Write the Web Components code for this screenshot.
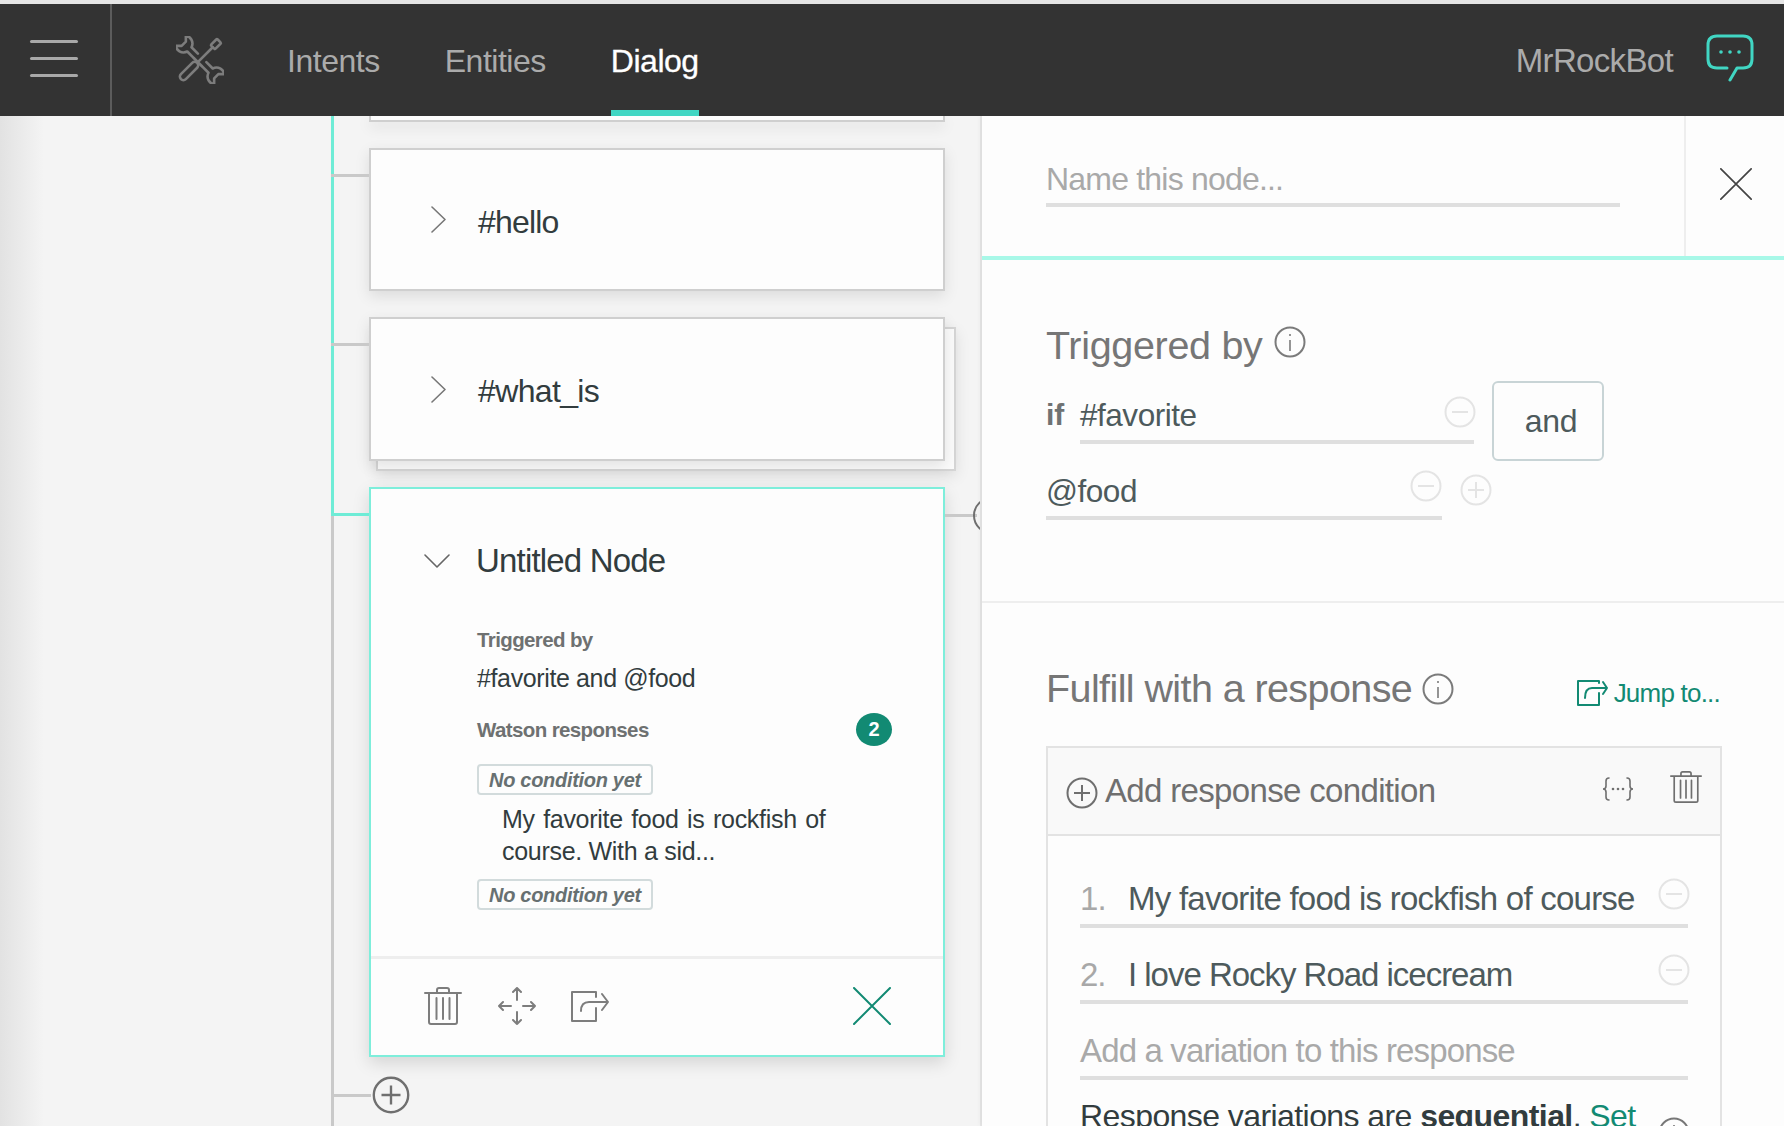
<!DOCTYPE html>
<html lang="en">
<head>
<meta charset="utf-8">
<title>Dialog</title>
<style>
  html, body { margin: 0; height: 1126px; overflow: hidden; background: #e6e6e6; }
  body { padding-top: 4px; box-sizing: border-box; font-family: "Liberation Sans", Arial, sans-serif; }
  .workspace { display: flex; height: 1010px; overflow: hidden; }
</style>
</head>
<body>
<app-bar></app-bar>
<div class="workspace">
  <tree-canvas>
    <node-card class="cut"></node-card>
    <node-card style="height:143px">#hello</node-card>
    <node-card stacked>#what_is</node-card>
    <active-node title="Untitled Node" trigger="#favorite and @food">
      <span slot="response">My favorite food is rockfish of course. With a sid...</span>
    </active-node>
    <add-node></add-node>
  </tree-canvas>
  <editor-panel></editor-panel>
</div>

<script>
  // icons are kept here so every shadow root can pull the one it needs
  const ICONS = {
    tools: `<svg width="48" height="48" viewBox="0 0 48 48" fill="none" stroke="currentColor" stroke-width="2.6" stroke-linecap="round" stroke-linejoin="round">
      <g transform="rotate(45 24 24)"><rect x="21" y="-3" width="6" height="9" rx="1"/><path d="M24 6V26M18.5 27H29.5"/><rect x="20.5" y="28" width="7" height="23" rx="3.5"/></g>
      <g transform="rotate(-45 24 24)"><path d="M21 18V9C15 7 14 0 17-3L21 1H27L31-3C34 0 33 7 27 9V18M21 30V39C15 41 14 48 17 51L21 47H27L31 51C34 48 33 41 27 39V30"/></g></svg>`,
    chat: `<svg width="48" height="48" viewBox="0 0 48 48" fill="none" stroke="currentColor" stroke-width="3" stroke-linecap="round" stroke-linejoin="round">
      <path d="M21 34H11Q2 34 2 25V11Q2 2 11 2H37Q46 2 46 11V25Q46 34 37 34H31L24 46"/><g fill="currentColor" stroke="none"><circle cx="15" cy="18" r="1.8"/><circle cx="24" cy="18" r="1.8"/><circle cx="33" cy="18" r="1.8"/></g></svg>`,
    trash: `<svg width="38" height="38" viewBox="0 0 38 38" fill="none" stroke="currentColor" stroke-width="2" stroke-linecap="round" stroke-linejoin="round">
      <path d="M1 6H37M13 6V3Q13 1 15 1H23Q25 1 25 3V6M5 6V35Q5 37 7 37H31Q33 37 33 35V6M12.5 11V32M19 11V32M25.5 11V32"/></svg>`,
    move: `<svg width="38" height="38" viewBox="0 0 38 38" fill="none" stroke="currentColor" stroke-width="2" stroke-linecap="round" stroke-linejoin="round">
      <path d="M19 1V13M15 5L19 1L23 5M19 25V37M15 33L19 37L23 33M1 19H13M5 15L1 19L5 23M25 19H37M33 15L37 19L33 23"/></svg>`,
    share: `<svg width="39" height="31" viewBox="0 0 39 31" fill="none" stroke="currentColor" stroke-width="2" stroke-linecap="round" stroke-linejoin="round">
      <path d="M25 6V1H1V30H25V17M10 20Q10 11 18 11H37M31 3L37 11L31 19"/></svg>`,
    jump: `<svg width="32" height="26" viewBox="0 0 32 26" fill="none" stroke="currentColor" stroke-width="2" stroke-linecap="round" stroke-linejoin="round">
      <path d="M22 3V1H1V25H22V13M8 18Q8 8 15 8H30M26 2L30 8L26 14"/></svg>`,
    close: `<svg width="38" height="38" viewBox="0 0 38 38" fill="none" stroke="currentColor" stroke-width="2" stroke-linecap="round"><path d="M1 1L37 37M37 1L1 37"/></svg>`,
    right: `<svg width="15" height="27" viewBox="0 0 15 27" fill="none" stroke="currentColor" stroke-width="1.6" stroke-linecap="round" stroke-linejoin="round"><path d="M1 1L14 13.5L1 26"/></svg>`,
    down: `<svg width="26" height="14" viewBox="0 0 26 14" fill="none" stroke="currentColor" stroke-width="1.6" stroke-linecap="round" stroke-linejoin="round"><path d="M1 1L13 13L25 1"/></svg>`,
    info: `<svg width="32" height="32" viewBox="0 0 32 32" fill="none" stroke="currentColor" stroke-width="2"><circle cx="16" cy="16" r="14.5"/><path d="M16 14V25M16 8V10" stroke-width="1.6"/></svg>`,
    minus: `<svg width="32" height="32" viewBox="0 0 32 32" fill="none" stroke="currentColor" stroke-width="2"><circle cx="16" cy="16" r="14.5"/><path d="M8 16H24"/></svg>`,
    plus: `<svg width="32" height="32" viewBox="0 0 32 32" fill="none" stroke="currentColor" stroke-width="2"><circle cx="16" cy="16" r="14.5"/><path d="M8 16H24M16 8V24"/></svg>`,
    braces: `<svg width="32" height="24" viewBox="0 0 32 24" fill="none" stroke="currentColor" stroke-width="1.6" stroke-linecap="round"><path d="M7 1Q4 1 4 4V9Q4 12 1 12Q4 12 4 15V20Q4 23 7 23M25 1Q28 1 28 4V9Q28 12 31 12Q28 12 28 15V20Q28 23 25 23"/><g fill="currentColor" stroke="none"><circle cx="11" cy="12" r="1.3"/><circle cx="16" cy="12" r="1.3"/><circle cx="21" cy="12" r="1.3"/></g></svg>`
  };

  class AppBar extends HTMLElement {
    constructor() {
      super();
      this.attachShadow({ mode: 'open' });
      this.shadowRoot.innerHTML = `
        <style>
          :host { display: flex; height: 112px; background: #333; color: #ababab; font-size: 32px; letter-spacing: -.015em; align-items: stretch; }
          .menu { width: 112px; border-right: 2px solid #5c5c5c; display: flex; flex-direction: column; justify-content: center; align-items: flex-start; gap: 14px; padding: 0 0 4px 30px; box-sizing: border-box; flex: none; }
          .menu i { display: block; width: 48px; height: 3px; border-radius: 2px; background: #a8a8a8; }
          .tools { color: #7d7d7d; margin: 32px 0 0 64px; flex: none; }
          nav { display: flex; margin-left: 63px; gap: 65px; }
          nav a { display: block; padding-top: 39px; line-height: 36px; box-sizing: border-box; }
          nav a.on { color: #fff; -webkit-text-stroke: .3px #fff; border-bottom: 6px solid #41d6c3; }
          .bot { margin-left: auto; padding-top: 39px; line-height: 36px; font-size: 33px; letter-spacing: -.02em; }
          .chat { color: #41d6c3; margin: 30px 30px 0 33px; flex: none; }
        </style>
        <div class="menu"><i></i><i></i><i></i></div>
        <div class="tools">${ICONS.tools}</div>
        <nav><a>Intents</a><a>Entities</a><a class="on">Dialog</a></nav>
        <div class="bot">MrRockBot</div>
        <div class="chat">${ICONS.chat}</div>`;
    }
  }

  class TreeCanvas extends HTMLElement {
    constructor() {
      super();
      this.attachShadow({ mode: 'open' });
      this.shadowRoot.innerHTML = `
        <style>
          :host { display: flex; flex-direction: column; align-items: flex-start; gap: 26px; flex: none; box-sizing: border-box; width: 980px; padding-left: 369px; position: relative; overflow: hidden; background: linear-gradient(90deg, #e2e2e2 0, #f4f4f4 44px); }
          .spine { position: absolute; left: 331px; top: 0; bottom: 0; width: 3px; background: #c9c9c9; }
          .spine::before { content: ""; position: absolute; left: 0; top: 0; width: 3px; height: 399px; background: #6eecd6; }
        </style>
        <div class="spine"></div>
        <slot></slot>`;
    }
  }

  class NodeCard extends HTMLElement {
    constructor() {
      super();
      this.attachShadow({ mode: 'open' });
      this.shadowRoot.innerHTML = `
        <style>
          :host { display: block; position: relative; width: 576px; height: 144px; box-sizing: border-box; flex: none; isolation: isolate; }
          :host(.cut) { height: 6px; }
          :host(.cut) .card { border-top: 0; }
          :host(.cut) .link, :host(.cut) .row { display: none; }
          .card { position: absolute; inset: 0; background: #fdfdfd; border: 2px solid #cfcfcf; box-shadow: 0 5px 14px rgba(0,0,0,.1); }
          .back { display: none; position: absolute; left: 7px; right: -11px; top: 10px; bottom: -10px; z-index: -1; background: #fbfbfb; border: 2px solid #d5d5d5; box-shadow: 0 5px 14px rgba(0,0,0,.1); }
          :host([stacked]) .back { display: block; }
          .link { position: absolute; left: -38px; top: 26px; width: 38px; height: 3px; background: #c9c9c9; }
          .row { position: absolute; inset: 0; display: flex; align-items: center; padding-left: 62px; gap: 32px; color: #777; }
          .label { color: #323c3e; font-size: 32px; letter-spacing: -.025em; line-height: 36px; padding-top: 5px; }
          :host([stacked]) .label { padding-top: 3px; letter-spacing: -.02em; }
        </style>
        <div class="back"></div>
        <div class="card"></div>
        <div class="link"></div>
        <div class="row">${ICONS.right}<span class="label"><slot></slot></span></div>`;
    }
  }

  class ActiveNode extends HTMLElement {
    constructor() {
      super();
      this.attachShadow({ mode: 'open' });
      this.shadowRoot.innerHTML = `
        <style>
          :host { display: flex; flex-direction: column; position: relative; width: 576px; height: 570px; box-sizing: border-box; flex: none; background: #fdfdfd; border: 2px solid #7eeedb; box-shadow: 0 6px 16px rgba(0,0,0,.13); color: #323c3e; }
          .link { position: absolute; left: -40px; top: 24px; width: 38px; height: 3px; background: #6eecd6; }
          .out { position: absolute; left: 574px; top: 25px; width: 32px; height: 3px; background: #c9c9c9; }
          .ring { position: absolute; left: 602px; top: 8px; width: 37px; height: 37px; box-sizing: border-box; border-radius: 50%; border: 2px solid #6f6f6f; }
          .head { display: flex; align-items: center; gap: 26px; padding: 54px 0 0 53px; font-size: 33px; letter-spacing: -.025em; line-height: 36px; }
          .head svg { color: #666; }
          .body { padding: 49px 0 0 106px; }
          h4 { margin: 0; color: #6e7171; font-size: 20.5px; letter-spacing: -.03em; line-height: 24px; font-weight: 700; }
          .trigger { font-size: 25px; letter-spacing: -.015em; line-height: 30px; margin: 11px 0 25px; }
          .resp { display: flex; justify-content: space-between; align-items: center; padding-right: 51px; }
          .badge { width: 36px; height: 33px; margin: -5px 0 -4px; border-radius: 50%; background: #128a73; color: #fff; font-size: 20px; font-weight: 700; display: flex; align-items: center; justify-content: center; }
          .chip { display: block; width: max-content; box-sizing: border-box; height: 31px; border: 2px solid #d2dbdc; border-radius: 4px; padding: 0 10px; color: #677071; font-size: 20px; letter-spacing: -.015em; line-height: 28px; font-weight: 700; font-style: italic; }
          .first { margin-top: 22px; }
          .text { width: 340px; margin: 8px 0 12px 25px; font-size: 25px; letter-spacing: -.012em; line-height: 32px; }
          .text::first-line { word-spacing: 1.8px; }
          .foot { margin-top: auto; height: 99px; box-sizing: border-box; border-top: 3px solid #eee; display: flex; align-items: center; gap: 36px; padding: 0 52px 2px 53px; color: #7d7d7d; }
          .foot .x { margin-left: auto; color: #128a73; height: 38px; }
          .foot div { height: 38px; display: flex; align-items: center; }
          .foot .sh { margin-left: -1px; }
        </style>
        <div class="link"></div>
        <div class="out"></div>
        <div class="ring"></div>
        <div class="head">${ICONS.down}<span>${this.getAttribute('title')}</span></div>
        <div class="body">
          <h4>Triggered by</h4>
          <div class="trigger">${this.getAttribute('trigger')}</div>
          <div class="resp"><h4>Watson responses</h4><span class="badge">2</span></div>
          <span class="chip first">No condition yet</span>
          <div class="text"><slot name="response"></slot></div>
          <span class="chip">No condition yet</span>
        </div>
        <div class="foot"><div>${ICONS.trash}</div><div>${ICONS.move}</div><div class="sh">${ICONS.share}</div><div class="x">${ICONS.close}</div></div>`;
    }
  }

  class AddNode extends HTMLElement {
    constructor() {
      super();
      this.attachShadow({ mode: 'open' });
      this.shadowRoot.innerHTML = `
        <style>
          :host { display: block; position: relative; width: 38px; height: 38px; margin: -7px 0 0 3px; color: #6f6f6f; flex: none; }
          svg { display: block; width: 38px; height: 38px; }
          .link { position: absolute; left: -40px; top: 18px; width: 39px; height: 3px; background: #c9c9c9; }
        </style>
        <div class="link"></div>${ICONS.plus}`;
    }
  }

  // underlined input look-alike, used all over the editor
  class LineField extends HTMLElement {
    constructor() {
      super();
      this.attachShadow({ mode: 'open' });
      this.shadowRoot.innerHTML = `
        <style>
          :host { display: block; position: relative; box-sizing: border-box; border-bottom: 4px solid #dfdfdf; padding-bottom: 6px; font-size: 31.5px; letter-spacing: -.015em; line-height: 36px; color: #4d5a5c; }
          :host([placeholder]) { color: #a9a9a9; }
          ::slotted([slot=action]) { position: absolute; right: -2px; top: -2px; color: #e4e4e4; height: 32px; }
        </style>
        <slot></slot><slot name="action"></slot>`;
    }
  }

  class EditorPanel extends HTMLElement {
    constructor() {
      super();
      this.attachShadow({ mode: 'open' });
      const minus = `<span slot="action">${ICONS.minus}</span>`;
      this.shadowRoot.innerHTML = `
        <style>
          :host { display: block; flex: 1; background: #fdfdfd; box-shadow: -3px 0 4px rgba(0,0,0,.03); margin-left: 2px; font-size: 30px; position: relative; }
          .top { display: flex; height: 144px; box-sizing: border-box; border-bottom: 4px solid #a8f8e8; }
          .name { width: 574px; margin: 45px 0 0 64px; align-self: flex-start; font-size: 32px; letter-spacing: -.025em; }
          .shut { margin-left: 64px; width: 100px; border-left: 2px solid #eee; color: #444; display: flex; justify-content: center; padding: 52px 0 0 2px; box-sizing: border-box; }
          .shut svg { width: 32px; height: 32px; }
          h2 { margin: 0; font-size: 39.5px; letter-spacing: -.015em; line-height: 44px; font-weight: 400; color: #767676; display: flex; }
          h2 span { color: #7b7b7b; margin: 3px 0 0 10px; height: 32px; }
          .trig h2 { letter-spacing: -.008em; }
          .trig h2 span { margin: -1px 0 0 11px; }
          .trig { height: 343px; box-sizing: border-box; border-bottom: 2px solid #eee; padding: 63px 0 0 64px; }
          .cond { display: flex; align-items: flex-start; margin-top: 14px; }
          .cond b { width: 34px; padding-top: 16px; line-height: 36px; color: #6f7273; }
          .cond line-field { width: 394px; margin-top: 16px; padding-bottom: 7px; }
          .cond [slot=action] { top: -1px; }
          .and { margin-left: 18px; width: 112px; height: 80px; box-sizing: border-box; border: 2px solid #c8d4d6; border-radius: 6px; color: #4d5a5c; text-align: center; line-height: 76px; font-size: 32px; letter-spacing: -.01em; padding-left: 6px; }
          .cond2 { display: flex; align-items: flex-start; margin-top: 12px; }
          .cond2 line-field { width: 396px; padding-bottom: 7px; }
          .cond2 [slot=action] { right: 0; top: -3px; }
          .cond2 .add { margin: 1px 0 0 18px; color: #e4e4e4; height: 32px; }
          .ful { padding: 63px 62px 0 64px; }
          .ful-head { display: flex; justify-content: space-between; align-items: flex-end; }
          .jump { color: #128a73; font-size: 26px; letter-spacing: -.03em; line-height: 30px; margin: 0 2px 2px 0; display: flex; align-items: center; gap: 5px; }
          .box { margin-top: 36px; border: 2px solid #e3e3e3; }
          .box-head { height: 88px; box-sizing: border-box; border-bottom: 2px solid #e3e3e3; background: #f9f9f9; display: flex; align-items: center; padding: 0 18px; color: #6f6f6f; font-size: 33px; letter-spacing: -.02em; }
          .box-head .p { height: 32px; margin: 4px 7px 0 0; }
          .box-head .c { margin: -6px 0 11px auto; height: 24px; }
          .box-head .t { margin-left: 36px; height: 32px; margin-top: -8px; }
          .box-head .t svg { width: 32px; height: 32px; }
          .vars { padding: 45px 32px 0; }
          .vars line-field { font-size: 33px; letter-spacing: -.023em; padding-bottom: 7px; margin-bottom: 29px; }
          .vars line-field.second { letter-spacing: -.031em; }
          .vars line-field.third { letter-spacing: -.026em; }
          .vars em { font-style: normal; color: #a8a8a8; display: inline-block; width: 48px; }
          .vars [slot=action] { top: -3px; }
          .mode { color: #323c3e; font-size: 32px; letter-spacing: -.018em; line-height: 36px; margin-top: -11px; position: relative; }
          .mode a { color: #128a73; }
          .mode span { position: absolute; right: -2px; top: 19px; color: #777; height: 32px; }
        </style>
        <div class="top">
          <line-field class="name" placeholder>Name this node...</line-field>
          <div class="shut">${ICONS.close}</div>
        </div>
        <section class="trig">
          <h2>Triggered by<span>${ICONS.info}</span></h2>
          <div class="cond">
            <b>if</b>
            <line-field>#favorite${minus}</line-field>
            <div class="and">and</div>
          </div>
          <div class="cond2">
            <line-field>@food${minus}</line-field>
            <span class="add">${ICONS.plus}</span>
          </div>
        </section>
        <section class="ful">
          <div class="ful-head">
            <h2>Fulfill with a response<span>${ICONS.info}</span></h2>
            <div class="jump">${ICONS.jump}<span>Jump to...</span></div>
          </div>
          <div class="box">
            <div class="box-head">
              <span class="p">${ICONS.plus}</span>
              <span>Add response condition</span>
              <span class="c">${ICONS.braces}</span>
              <span class="t">${ICONS.trash}</span>
            </div>
            <div class="vars">
              <line-field><em>1.</em>My favorite food is rockfish of course${minus}</line-field>
              <line-field class="second"><em>2.</em>I love Rocky Road icecream${minus}</line-field>
              <line-field class="third" placeholder>Add a variation to this response</line-field>
              <div class="mode">Response variations are <b>sequential</b>. <a>Set</a><span>${ICONS.info}</span></div>
            </div>
          </div>
        </section>`;
    }
  }

  customElements.define('app-bar', AppBar);
  customElements.define('tree-canvas', TreeCanvas);
  customElements.define('node-card', NodeCard);
  customElements.define('active-node', ActiveNode);
  customElements.define('add-node', AddNode);
  customElements.define('line-field', LineField);
  customElements.define('editor-panel', EditorPanel);
</script>
</body>
</html>
